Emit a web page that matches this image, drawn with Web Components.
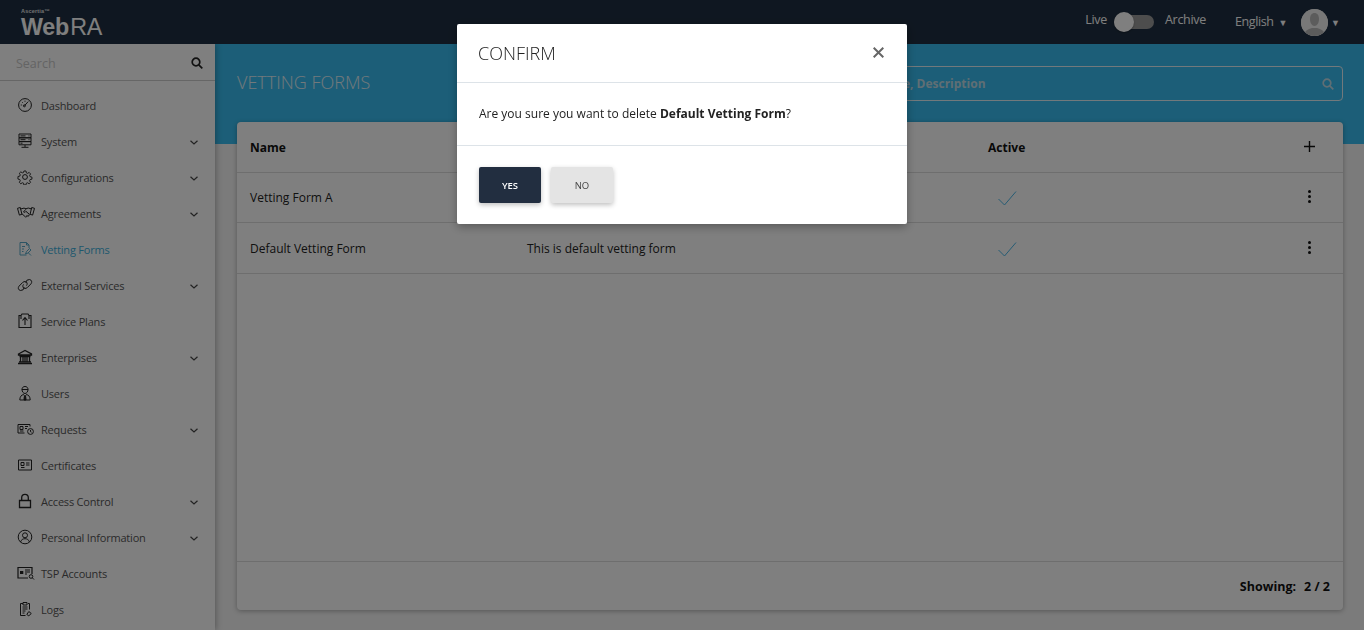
<!DOCTYPE html>
<html lang="en">
<head>
<meta charset="utf-8">
<title>WebRA - Vetting Forms</title>
<style>
    html, body {
        margin: 0;
        height: 630px;
        overflow: hidden;
        font-family: "Open Sans", "Liberation Sans", sans-serif;
    }
</style>
</head>
<body>
<app-shell>
    <top-bar slot="top"></top-bar>
    <side-nav slot="side">
        <nav-item icon="dashboard">Dashboard</nav-item>
        <nav-item icon="system" more>System</nav-item>
        <nav-item icon="config" more>Configurations</nav-item>
        <nav-item icon="agreements" more>Agreements</nav-item>
        <nav-item icon="vetting" active>Vetting Forms</nav-item>
        <nav-item icon="external" more>External Services</nav-item>
        <nav-item icon="plans">Service Plans</nav-item>
        <nav-item icon="bank" more>Enterprises</nav-item>
        <nav-item icon="users">Users</nav-item>
        <nav-item icon="requests" more>Requests</nav-item>
        <nav-item icon="certs">Certificates</nav-item>
        <nav-item icon="lock" more>Access Control</nav-item>
        <nav-item icon="person" more>Personal Information</nav-item>
        <nav-item icon="tsp">TSP Accounts</nav-item>
        <nav-item icon="logs">Logs</nav-item>
    </side-nav>
    <page-banner slot="main" title-text="VETTING FORMS" hint="Search by Name, Description"></page-banner>
    <forms-card slot="main">
        <form-row name="Vetting Form A"></form-row>
        <form-row name="Default Vetting Form" desc="This is default vetting form" tall></form-row>
    </forms-card>
</app-shell>
<confirm-dialog>
    <span slot="title">CONFIRM</span>
    Are you sure you want to delete <b>Default Vetting Form</b>?
</confirm-dialog>

<script>
const ICONS = {
    dashboard: `<circle cx="8" cy="8" r="6.4"/><path d="M7.6 8.6l3.600-4M3.800 8h1M8 3.700v1M5 5l.7.7"/><circle cx="7.400" cy="8.800" r="1"/>`,
    system: `<path d="M2 1h12v3.800H2zM2 4.800h12v3.800H2zM2 8.600h12v3.200H2zM8 12v2M4.500 14.300h7M3.500 2.900h5M3.500 6.700h5M3.500 10.200h2M11.500 2.900h1M11.500 6.700h1"/>`,
    config: `<circle cx="8" cy="8" r="2.400"/><path d="M6.900 1.500h2.200l.4 2 1.300.6 1.800-1 1.500 1.600-1 1.700.5 1.300 2 .5v2.200l-2 .4-.6 1.300 1.100 1.800-1.600 1.500-1.700-1.100-1.300.5-.5 2H6.900l-.4-2-1.300-.5-1.800 1.100-1.500-1.600 1-1.700-.5-1.300-2-.5V7.500l2-.4.5-1.300-1-1.800 1.600-1.500 1.700 1 1.300-.5z" transform="translate(.6 .6) scale(.92)"/>`,
    agreements: `<path d="M.5 3.300l2.800-.8 1.600 6.800-2.500.8zM17.500 3.300l-2.800-.8-1.600 6.800 2.500.8zM3.600 4l3.400-.9 2 .7 2.200-.8 3.200.9M5 8.800l3.300 3c.9.7 1.800-.2 1.200-1l2.200.3.500-1.600M8.800 4.300L6.500 7c.8.800 1.800.3 2.500-.6l3.500 3"/>`,
    vetting: `<path d="M9.500 14H3V1.500h6.500L12 4v3M9.500 1.500V4H12M5 5.500h3M5 8h2M5 10.500h1.500M8.500 13l1-2.500 3-3 1.500 1.500-3 3zM11.500 12l2.500 2.500"/>`,
    external: `<path d="M7.300 10.300a3.700 3.700 0 0 1-3.900 3.200C1.200 13 .7 10.800 2 9.200l3.600-3.700c1.700-1.500 4-1.200 4.500.6.200 1 0 1.800-.6 2.500"/><path d="M8.700 5.700a3.700 3.700 0 0 1 3.900-3.200c2.200.5 2.700 2.700 1.400 4.300l-3.600 3.700c-1.700 1.500-4 1.200-4.500-.6-.2-1 0-1.800.6-2.500"/>`,
    plans: `<path d="M4 2.500H2v12h12v-12h-2M4 2.500l1-1.500h6l1 1.500M8 12V5M5.500 7.500L8 4.500l2.500 3M4 2.500v3.500M12 2.500v3.500" stroke-width="1.100"/>`,
    bank: `<path d="M1.500 5L8 1.500 14.500 5v1h-13zM2.500 7.500h11M3.500 7.500v5M6 7.500v5M8 7.500v5M10 7.500v5M12.500 7.500v5M2 12.800h12M1 14.500h14" stroke-width="1.300"/>`,
    users: `<path d="M5 4.500C5 2.500 6.300 1.500 8 1.500s3 1 3 3-1.300 4-3 4-3-2-3-4zM4.800 4.500h6.400M2.800 15c0-3.500 1.700-5 3.700-5.500L8 11.500l1.500-2c2 .5 3.700 2 3.700 5.500z"/><path d="M7.300 11.500h1.400L9 15H7z" fill="currentColor"/>`,
    requests: `<path d="M13 4.500V2.500H1v8.500h6.500M3 4.500h3v3H3zM3 9h3.500M8 4.500h3M8 6.500h2" transform="translate(0 1)"/><circle cx="13.500" cy="10.500" r="2.900"/><path d="M13.500 9v1.700l1 .5"/>`,
    certs: `<path d="M1.500 3h13v10h-13zM4 5.500h3v3H4zM4 10.500h3.500M9 6h3.500M9 8h3.500"/>`,
    lock: `<path d="M2.500 7.500h11v7h-11zM4.700 7.500V4.700a3.300 3.300 0 0 1 6.600 0v2.800" stroke-width="1.300"/>`,
    person: `<circle cx="8" cy="8" r="6.800"/><circle cx="8" cy="6.300" r="2.500"/><path d="M3.500 13c.7-2.300 2.500-3.300 4.500-3.300s3.800 1 4.500 3.300"/>`,
    tsp: `<path d="M15 9V2.500H1v10.500h10" stroke-width="1.200"/><path d="M8 5h5M8 7h5M8 9h2"/><path d="M3 7.500h3.300" stroke-width="3"/><circle cx="14" cy="11.500" r="1.800"/><path d="M15.300 12.800l1.700 1.700"/>`,
    logs: `<path d="M6 2.500H3.500v12h5M11 2.500h1.500v6M6 1.500h4v2.500H6zM5.500 6h5M5.500 8h5M5.500 10h3M5.500 12h2"/><path d="M9.800 13.500l2-3 2.500 2-2.500 2.300z"/>`
};

const SEARCH_ICON = `<svg width="12" height="12" viewBox="0 0 12 12" fill="none" stroke="currentColor" stroke-width="1.700"><circle cx="5" cy="5" r="3.800"/><path d="M7.800 7.800L11.300 11.300"/></svg>`;

class AppShell extends HTMLElement {
    constructor() {
        super();
        this.attachShadow({ mode: "open" });
        this.shadowRoot.innerHTML = `
        <style>
            :host {
                display: grid;
                grid-template-columns: 215px 1fr;
                grid-template-rows: 44px 586px;
                height: 630px;
                background: #f6f6f6;
            }
            .top { grid-column: 1 / 3; z-index: 3; }
            .side { z-index: 2; min-height: 0; }
            .main { min-width: 0; }
        </style>
        <div class="top"><slot name="top"></slot></div>
        <div class="side"><slot name="side"></slot></div>
        <div class="main"><slot name="main"></slot></div>
        `;
    }
}

class TopBar extends HTMLElement {
    constructor() {
        super();
        this.attachShadow({ mode: "open" });
        this.shadowRoot.innerHTML = `
        <style>
            :host {
                display: flex;
                align-items: center;
                height: 44px;
                background: #1f2f42;
                color: #fff;
                font-size: 12.5px;
                padding: 0 24px 0 21px;
                box-sizing: border-box;
            }
            .logo { display: flex; flex-direction: column; color: #fff; padding-top: 2px; }
            .logo small { font-family: "Liberation Sans", sans-serif; font-size: 5.5px; line-height: 6px; font-weight: 700; letter-spacing: .2px; opacity: .85; margin-bottom: 1px; }
            .logo span { font-family: "Liberation Sans", sans-serif; font-size: 23.3px; line-height: 24px; font-weight: 700; letter-spacing: -.2px; }
            .logo i { font-style: normal; font-weight: 400; margin-left: 1px; }
            .grow { flex: 1; }
            .mode { display: flex; align-items: center; gap: 7px; margin-top: -5px; letter-spacing: -.3px; }
            .mode span:last-child { margin-left: 4px; }
            .switch { position: relative; width: 40px; height: 14px; border-radius: 7px; background: #9b9b9b; margin-top: 5px; }
            .knob { position: absolute; left: 0; top: -3px; width: 20px; height: 20px; border-radius: 50%; background: #fff; box-shadow: 0 1px 2px rgba(0,0,0,.3); }
            .lang { margin-left: 29px; letter-spacing: -.4px; margin-top: -1px; }
            .arrow { font-size: 9px; margin-left: 5px; }
            .user { display: flex; align-items: center; margin-left: 14px; }
            .user .arrow { margin-left: 3px; }
            .avatar { width: 27px; height: 27px; border-radius: 50%; background: #e4e4e4; overflow: hidden; display: block; }
        </style>
        <div class="logo"><small>Ascertia™</small><span>Web<i>RA</i></span></div>
        <div class="grow"></div>
        <div class="mode">
            <span>Live</span>
            <div class="switch"><div class="knob"></div></div>
            <span>Archive</span>
        </div>
        <div class="lang">English<span class="arrow">▼</span></div>
        <div class="user">
            <svg class="avatar" viewBox="0 0 27 27"><rect width="27" height="27" fill="#f0f0f0"/><path d="M9 10c0-4 2-6 4.500-6s4.500 2 4.500 6-2 7-4.500 7-4.500-3-4.500-7z" fill="#b9b9b9"/><path d="M3 27c0-5 4-7 8-8h5c4 1 8 3 8 8z" fill="#b9b9b9"/></svg>
            <span class="arrow">▼</span>
        </div>
        `;
    }
}

class SideNav extends HTMLElement {
    constructor() {
        super();
        this.attachShadow({ mode: "open" });
        this.shadowRoot.innerHTML = `
        <style>
            :host {
                display: block;
                height: 586px;
                background: #fff;
                box-shadow: 1px 0 6px rgba(0,0,0,.3);
                overflow: hidden;
            }
            .search {
                display: flex;
                align-items: center;
                justify-content: space-between;
                height: 37px;
                padding: 2px 12px 0 16px;
                box-sizing: border-box;
                border-bottom: 1px solid #ccc;
                font-size: 12.5px;
                color: #c8c8c8;
            }
            .search svg { color: #222; }
            .list { padding-top: 6px; }
        </style>
        <div class="search"><span>Search</span>${SEARCH_ICON}</div>
        <div class="list"><slot></slot></div>
        `;
    }
}

class NavItem extends HTMLElement {
    constructor() {
        super();
        this.attachShadow({ mode: "open" });
    }

    connectedCallback() {
        const name = this.getAttribute("icon");
        const chevron = this.hasAttribute("more")
            ? `<svg class="chev" width="8" height="5" viewBox="0 0 8 5" fill="none" stroke="currentColor" stroke-width="1.2"><path d="M.5.7L4 4 7.500.7"/></svg>`
            : "";
        this.shadowRoot.innerHTML = `
        <style>
            :host {
                display: flex;
                align-items: center;
                height: 36px;
                padding: 0 17px;
                font-size: 11px;
                color: #555;
                letter-spacing: -.2px;
            }
            :host([active]) { color: #3db0dc; }
            svg.ic { width: 18px; height: 16px; margin-right: 6px; flex: none; color: #222; }
            :host([active]) svg.ic { color: #58a9c8; }
            .label { flex: 1; }
            .chev { color: #444; margin-top: 2px; }
        </style>
        <svg class="ic" viewBox="0 0 18 16" fill="none" stroke="currentColor" stroke-width="1">${ICONS[name]}</svg>
        <span class="label"><slot></slot></span>
        ${chevron}
        `;
    }
}

class PageBanner extends HTMLElement {
    constructor() {
        super();
        this.attachShadow({ mode: "open" });
    }

    connectedCallback() {
        this.shadowRoot.innerHTML = `
        <style>
            :host {
                display: flex;
                align-items: center;
                justify-content: space-between;
                height: 100px;
                box-sizing: border-box;
                padding: 0 21px 22px 22px;
                background: #38bdf0;
                color: #fff;
            }
            h1 { margin: -2px 0 0; font-size: 18px; font-weight: 300; color: #e4f2f8; }
            .box {
                display: flex;
                align-items: center;
                justify-content: space-between;
                width: 553px;
                height: 35px;
                box-sizing: border-box;
                border: 1px solid #e4f2f8;
                border-radius: 4px;
                padding: 0 8px 0 22px;
                font-size: 12px;
                font-weight: 700;
                color: #c0dde9;
                margin-top: 1px;
            }
        </style>
        <h1>${this.getAttribute("title-text")}</h1>
        <div class="box"><span>${this.getAttribute("hint")}</span>${SEARCH_ICON}</div>
        `;
    }
}

class FormsCard extends HTMLElement {
    constructor() {
        super();
        this.attachShadow({ mode: "open" });
        this.shadowRoot.innerHTML = `
        <style>
            :host {
                display: flex;
                flex-direction: column;
                height: 488px;
                margin: -22px 21px 0 22px;
                background: #fff;
                border-radius: 4px;
                box-shadow: 0 1px 5px rgba(0,0,0,.3);
                font-size: 12px;
                color: #222;
            }
            .head {
                display: grid;
                grid-template-columns: 277px 461px 1fr 39px;
                align-items: center;
                height: 51px;
                padding-left: 13px;
                box-sizing: border-box;
                border-bottom: 1px solid #ddd;
                font-weight: 700;
                color: #111;
            }
            .head span { margin-top: 1px; }
            .head svg { display: block; margin-top: -2px; }
            .rows { flex: 1; }
            .foot {
                display: flex;
                justify-content: flex-end;
                align-items: center;
                gap: 8px;
                height: 49px;
                padding-right: 13px;
                box-sizing: border-box;
                border-top: 1px solid #ddd;
                font-size: 12.5px;
                font-weight: 700;
                color: #111;
            }
        </style>
        <div class="head">
            <span>Name</span>
            <span>Description</span>
            <span>Active</span>
            <svg width="11" height="11" viewBox="0 0 11 11" stroke="#111" stroke-width="1.4"><path d="M5.500 0v11M0 5.500h11"/></svg>
        </div>
        <div class="rows"><slot></slot></div>
        <div class="foot"><span>Showing:</span><span>2 / 2</span></div>
        `;
    }
}

class FormRow extends HTMLElement {
    constructor() {
        super();
        this.attachShadow({ mode: "open" });
    }

    connectedCallback() {
        this.shadowRoot.innerHTML = `
        <style>
            :host {
                display: grid;
                grid-template-columns: 277px 461px 1fr 39px;
                align-items: center;
                height: 50px;
                padding-left: 13px;
                box-sizing: border-box;
                border-bottom: 1px solid #ddd;
            }
            :host([tall]) { height: 51px; }
            .check { display: block; margin-left: 10px; margin-top: 2px; }
            .dots { display: flex; flex-direction: column; gap: 2px; margin-left: 4px; margin-top: -2px; }
            .dots i { width: 3px; height: 3px; border-radius: 50%; background: #111; }
        </style>
        <span>${this.getAttribute("name")}</span>
        <span>${this.getAttribute("desc") || ""}</span>
        <svg class="check" width="19" height="15" viewBox="0 0 19 15" fill="none" stroke="#4cb8e8" stroke-width="1"><path d="M.5 8l6 6L18 .5"/></svg>
        <div class="dots"><i></i><i></i><i></i></div>
        `;
    }
}

class ConfirmDialog extends HTMLElement {
    constructor() {
        super();
        this.attachShadow({ mode: "open" });
        this.shadowRoot.innerHTML = `
        <style>
            :host {
                position: fixed;
                inset: 0;
                z-index: 10;
                background: rgba(0,0,0,.5);
                display: flex;
                justify-content: center;
                align-items: flex-start;
                padding-top: 24px;
                box-sizing: border-box;
            }
            .dialog {
                width: 450px;
                height: 200px;
                background: #fff;
                border-radius: 2px;
                box-shadow: 0 3px 10px rgba(0,0,0,.3);
                display: flex;
                flex-direction: column;
                color: #222;
            }
            header {
                display: flex;
                justify-content: space-between;
                align-items: center;
                height: 59px;
                padding: 0 23px 0 21px;
                border-bottom: 1px solid #dde3e8;
                font-size: 18px;
                font-weight: 300;
                box-sizing: border-box;
            }
            header svg { display: block; margin-top: -2px; }
            .body {
                height: 63px;
                padding: 0 22px;
                box-sizing: border-box;
                display: flex;
                align-items: center;
                border-bottom: 1px solid #dde3e8;
                font-size: 12px;
            }
            .body div { margin-top: -2px; }
            footer { display: flex; gap: 10px; padding: 21px 22px 0; }
            button {
                width: 62px;
                height: 36px;
                border: 0;
                border-radius: 2px;
                font: inherit;
                font-size: 9.5px;
                box-shadow: 0 2px 5px rgba(0,0,0,.25);
            }
            .yes { background: #222e40; color: #fff; font-weight: 600; }
            .no { background: #e4e4e4; color: #444; }
        </style>
        <div class="dialog">
            <header>
                <slot name="title"></slot>
                <svg width="11" height="11" viewBox="0 0 11 11" stroke="#666" stroke-width="2"><path d="M.7.7l9.600 9.600M10.300.7L.7 10.300"/></svg>
            </header>
            <div class="body"><div><slot></slot></div></div>
            <footer>
                <button class="yes">YES</button>
                <button class="no">NO</button>
            </footer>
        </div>
        `;
    }
}

customElements.define("app-shell", AppShell);
customElements.define("top-bar", TopBar);
customElements.define("side-nav", SideNav);
customElements.define("nav-item", NavItem);
customElements.define("page-banner", PageBanner);
customElements.define("forms-card", FormsCard);
customElements.define("form-row", FormRow);
customElements.define("confirm-dialog", ConfirmDialog);
</script>
</body>
</html>
